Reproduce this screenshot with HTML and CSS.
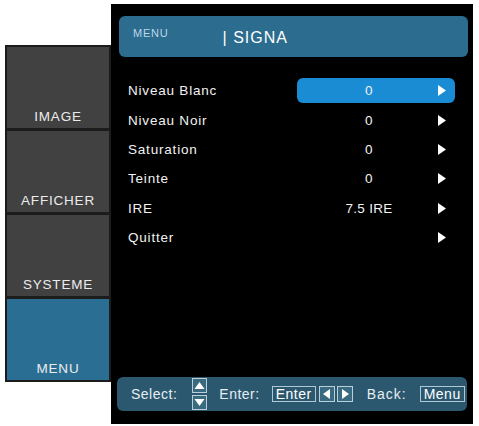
FILE: index.html
```html
<!DOCTYPE html>
<html lang="fr">

<head>
    <meta charset="UTF-8">
    <title>Menu OSD - Signal</title>
    <link rel="stylesheet" href="styles.css">
</head>

<body>
    <div class="osd">
        <!-- Onglets de gauche -->
        <nav class="tabs">
            <div class="tab">IMAGE</div>
            <div class="tab">AFFICHER</div>
            <div class="tab">SYSTEME</div>
            <div class="tab active">MENU</div>
        </nav>

        <!-- Panneau principal -->
        <main class="panel">
            <header class="title">
                <span class="title-menu">MENU</span>
                <span class="title-name">| SIGNA</span>
            </header>

            <ul class="items">
                <li class="item selected">
                    <span class="label">Niveau Blanc</span>
                    <span class="cell">
                        <span class="value">0</span>
                        <svg class="arrow" viewBox="0 0 8 11"><polygon points="0,0 8,5.5 0,11" /></svg>
                    </span>
                </li>
                <li class="item">
                    <span class="label">Niveau Noir</span>
                    <span class="cell">
                        <span class="value">0</span>
                        <svg class="arrow" viewBox="0 0 8 11"><polygon points="0,0 8,5.5 0,11" /></svg>
                    </span>
                </li>
                <li class="item">
                    <span class="label">Saturation</span>
                    <span class="cell">
                        <span class="value">0</span>
                        <svg class="arrow" viewBox="0 0 8 11"><polygon points="0,0 8,5.5 0,11" /></svg>
                    </span>
                </li>
                <li class="item">
                    <span class="label">Teinte</span>
                    <span class="cell">
                        <span class="value">0</span>
                        <svg class="arrow" viewBox="0 0 8 11"><polygon points="0,0 8,5.5 0,11" /></svg>
                    </span>
                </li>
                <li class="item">
                    <span class="label">IRE</span>
                    <span class="cell">
                        <span class="value">7.5 IRE</span>
                        <svg class="arrow" viewBox="0 0 8 11"><polygon points="0,0 8,5.5 0,11" /></svg>
                    </span>
                </li>
                <li class="item">
                    <span class="label">Quitter</span>
                    <span class="cell">
                        <span class="value"></span>
                        <svg class="arrow" viewBox="0 0 8 11"><polygon points="0,0 8,5.5 0,11" /></svg>
                    </span>
                </li>
            </ul>

            <!-- Barre d'aide en bas -->
            <footer class="help">
                <span class="help-text">Select:</span>
                <svg class="updown" viewBox="0 0 15 32">
                    <rect x="0.5" y="0.5" width="14" height="14" />
                    <polygon class="tri" points="2.5,11 7.5,4 12.5,11" />
                    <rect x="0.5" y="17.5" width="14" height="14" />
                    <polygon class="tri" points="2.5,21 12.5,21 7.5,28" />
                </svg>
                <span class="help-text enter">Enter:</span>
                <span class="key">Enter</span>
                <svg class="key-icon" viewBox="0 0 16 16">
                    <rect x="0.5" y="0.5" width="15" height="15" />
                    <polygon class="tri" points="11,3 11,13 4,8" />
                </svg>
                <svg class="key-icon" viewBox="0 0 16 16">
                    <rect x="0.5" y="0.5" width="15" height="15" />
                    <polygon class="tri" points="5,3 5,13 12,8" />
                </svg>
                <span class="help-text back">Back:</span>
                <span class="key">Menu</span>
            </footer>
        </main>
    </div>
</body>

</html>
```

FILE: styles.css
```css
/* Reseteo básico */
* {
    margin: 0;
    padding: 0;
    box-sizing: border-box;
}

body {
    background: #fff;
    font-family: "Liberation Sans", Arial, sans-serif;
    color: #f2f2f2;
}

.osd {
    display: flex;
    align-items: flex-start;
    padding: 4px 0 0 5px;
}

/* Onglets de gauche */
.tabs {
    width: 106px;
    margin-top: 41px;
    display: flex;
    flex-direction: column;
    gap: 3px;
    padding: 2px;
    background: #1c1c1c;
}

.tab {
    height: 81px;
    background: #414141;
    display: flex;
    align-items: flex-end;
    justify-content: center;
    padding-bottom: 3px;
    font-size: 13.5px;
    line-height: 16px;
    letter-spacing: 0.8px;
    color: #ececec;
}

.tab.active {
    background: #2b6e93;
}

/* Panneau principal */
.panel {
    width: 362px;
    height: 420px;
    background: #000;
    display: flex;
    flex-direction: column;
    padding: 12px 5px 13px 8px;
}

.title {
    height: 41px;
    background: #2b6c8f;
    border-radius: 6px;
    display: flex;
    align-items: flex-start;
    padding: 11px 0 0 14px;
    flex-shrink: 0;
}

.title-menu {
    font-size: 11px;
    line-height: 13px;
    letter-spacing: 0.8px;
    color: #bcd6e6;
}

.title-name {
    margin-left: 54px;
    font-size: 16px;
    line-height: 18px;
    letter-spacing: 1px;
    color: #fff;
    margin-top: 2px;
}

/* Lista de opciones */
.items {
    list-style: none;
    margin-top: 19px;
    padding-left: 9px;
}

.item {
    height: 29.4px;
    display: flex;
    align-items: center;
    font-size: 13.5px;
    letter-spacing: 0.8px;
}

.label {
    width: 169px;
}

.cell {
    width: 158px;
    height: 25px;
    display: flex;
    align-items: center;
    padding-left: 4px;
    border-radius: 6px;
}

.item.selected .cell {
    background: #1a8cd3;
}

.value {
    width: 136px;
    text-align: center;
    letter-spacing: 0.3px;
}

.arrow {
    width: 8px;
    height: 11px;
    margin-left: 1px;
    fill: #fff;
}

/* Barra de ayuda */
.help {
    margin: auto 1px 0 -2px;
    height: 34px;
    background: #2b586f;
    border-radius: 6px;
    display: flex;
    align-items: center;
    padding-left: 14px;
    font-size: 14px;
    letter-spacing: 0.5px;
    color: #e6eef2;
}

.updown {
    width: 15px;
    height: 32px;
    margin-left: 15px;
}

.updown rect,
.key-icon rect {
    fill: #3a6a80;
    stroke: #b9cfda;
    stroke-width: 1;
}

.tri {
    fill: #fff;
}

.enter {
    margin-left: 12px;
}

.key {
    margin-left: 12px;
    height: 16px;
    line-height: 14px;
    border: 1px solid #b0c8d4;
    padding: 0 3px;
    color: #fff;
}

.key-icon {
    width: 16px;
    height: 16px;
    margin-left: 3px;
}

.key-icon + .key-icon {
    margin-left: 2px;
}

.back {
    margin-left: 14px;
    letter-spacing: 1px;
}

.back + .key {
    margin-left: 13px;
}
```
